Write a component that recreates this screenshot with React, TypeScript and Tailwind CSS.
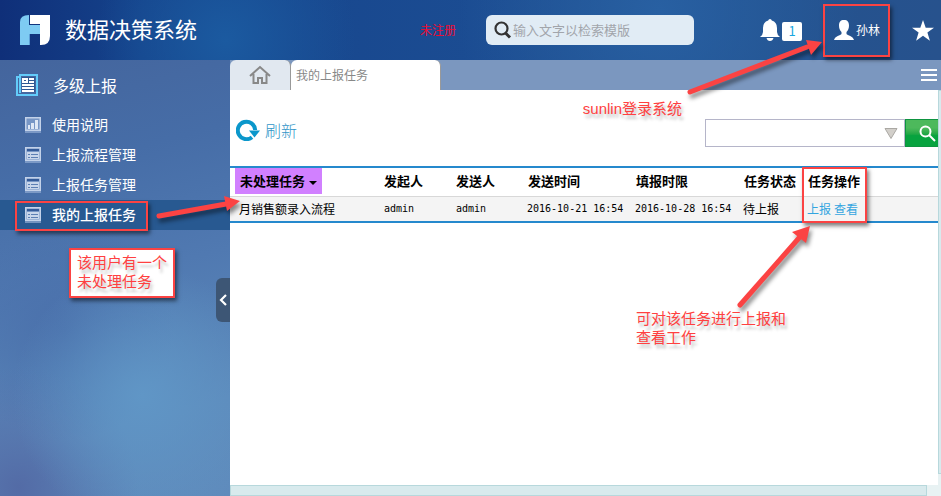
import React from 'react';
import clsx from 'clsx';

const menuItems = [
  { label: '使用说明', icon: 'chart' },
  { label: '上报流程管理', icon: 'form' },
  { label: '上报任务管理', icon: 'form' },
  { label: '我的上报任务', icon: 'form', active: true },
];

const tasks = [
  {
    name: '月销售额录入流程',
    initiator: 'admin',
    sender: 'admin',
    sentAt: '2016-10-21 16:54',
    deadline: '2016-10-28 16:54',
    status: '待上报',
  },
];

const Logo: React.FC = () => (
  <svg width="32" height="32" viewBox="0 0 32 32" aria-hidden="true">
    <path d="M10 1v10h11v9H10v11H1V8q0-7 9-7z" fill="#7ecbf3" />
    <path d="M11 1h20v21q0 9-9 9h-1V10H11z" fill="#fff" />
    <path d="M10.500 20v11" stroke="#5d9ed6" />
  </svg>
);

const SectionIcon: React.FC = () => (
  <svg width="22" height="22" viewBox="0 0 22 22" aria-hidden="true">
    <path d="M4 1h17v20H1V3h3z" fill="none" stroke="#63ccfa" strokeWidth="2" />
    <path d="M4 3v16" stroke="#63ccfa" strokeWidth="2" />
    <path d="M6 3h13v15H6z" fill="#2f5893" />
    <path d="M6 4h6v5H6zM13 4h5v2h-5zM13 7h5v2h-5zM6 10h12v2H6zM6 13h12v2H6zM6 16h12v2H6z" fill="#fff" />
    <path d="M8 6h2v1H8z" fill="#2f5893" />
  </svg>
);

const MenuIcon: React.FC<{ type: string }> = ({ type }) => (
  <svg width="16" height="16" viewBox="0 0 16 16" className="mt-0.5" aria-hidden="true">
    <path d="M.75 .75h14.500v12.500H.75z" fill="#7796c5" stroke="#c3d2e9" strokeWidth="1.500" />
    <path d="M0 15h16" stroke="#8ea8d0" strokeWidth="1.500" />
    {type === 'chart' ? (
      <path d="M3 8h2v4H3zM6 6h3v6H6zM10 3h3v9h-3z" fill="#dfe8f5" />
    ) : (
      <>
        <path d="M2 2h12v2H2z" fill="#345b99" />
        <path d="M2 5h12v7H2z" fill="#c8d6eb" />
        <path d="M3 7.500h2M6 7.500h7M3 10.500h2M6 10.500h7" stroke="#5c7fb4" />
      </>
    )}
  </svg>
);

const Header: React.FC = () => (
  <header className="flex h-15 items-center pr-[7px] pl-[19px] text-white">
    <Logo />
    <h1 className="ml-3.5 pb-1 text-[22px] leading-8 whitespace-nowrap">数据决策系统</h1>
    <span className="ml-auto text-xs text-[#f00a32]">未注册</span>
    <label className="ml-[30px] flex h-[30px] w-52 items-center rounded-md bg-[#e1ecf5] pl-2">
      <svg width="18" height="18" viewBox="0 0 18 18" fill="none" stroke="#333" aria-hidden="true">
        <circle cx="7.500" cy="7.500" r="6" strokeWidth="2.200" />
        <path d="M11.500 12l4.500 4.500" strokeWidth="3" />
      </svg>
      <input
        type="text"
        aria-label="检索模版"
        placeholder="输入文字以检索模版"
        className="ml-px w-44 min-w-0 bg-transparent text-[13px] text-[#333] outline-none placeholder:text-[#a2a5ab]"
      />
    </label>
    <button type="button" aria-label="消息" className="ml-[66px] flex items-center gap-0.5">
      <svg width="20" height="22" viewBox="0 0 20 22" fill="#fff" aria-hidden="true">
        <path d="M10 0q1.500 0 1.800 1.500Q17 3 17 9v4q0 2.500 3 5H0q3-2.500 3-5V9q0-6 5.200-7.500Q8.500 0 10 0zM6.500 19h7q-.8 3-3.500 3t-3.500-3z" />
      </svg>
      <span className="mt-0.5 h-[19px] w-5 rounded-xs bg-white text-center text-[13px] leading-[18px] text-[#1aa5e0]">1</span>
    </button>
    <button type="button" className="ml-8 flex items-center gap-0.5 text-xs">
      <svg width="20" height="20" viewBox="0 0 20 20" fill="#fff" aria-hidden="true">
        <path d="M10 0c3.500 0 5 2 5 5.500 0 3-.9 5-2.500 6.500v2c1 1.500 6.500 2 7.500 6H0c1-4 6.500-4.500 7.500-6v-2C5.900 10.500 5 8.500 5 5.500 5 2 6.500 0 10 0z" />
      </svg>
      孙林
    </button>
    <button type="button" aria-label="收藏" className="ml-8">
      <svg width="22" height="21" viewBox="0 0 22 21" fill="#fff" aria-hidden="true">
        <path d="M11 0l2.700 7.700H22l-6.600 4.900 2.500 8.100L11 15.800l-6.900 4.900 2.500-8.100L0 7.700h8.300z" />
      </svg>
    </button>
  </header>
);

const Sidebar: React.FC = () => (
  <aside className="relative w-[230px] shrink-0 bg-[radial-gradient(circle_at_62%_77%,#6096c6_0%,transparent_130px),radial-gradient(circle_at_8%_98%,#536ba6_0%,transparent_120px),radial-gradient(circle_at_28%_62%,#4a70ab_0%,transparent_110px),linear-gradient(165deg,#44659d_0%,#466da7_25%,#5079b1_50%,#5d8abb_80%,#5f8bbc_100%)]">
    <h2 className="flex h-[50px] items-center gap-[15px] pl-[16px] text-base text-white">
      <SectionIcon />
      多级上报
    </h2>
    <nav>
      {menuItems.map((item) => (
        <a
          key={item.label}
          href="#"
          className={clsx(
            'flex h-[30px] items-center gap-[11px] pb-0.5 pl-[25px] text-sm text-white',
            item.active && 'bg-[#285991] font-medium',
          )}
        >
          <MenuIcon type={item.icon} />
          {item.label}
        </a>
      ))}
    </nav>
    <button
      type="button"
      aria-label="收起菜单"
      className="absolute top-[218px] right-0 flex h-11 w-3.5 items-center justify-center rounded-l-md bg-[#3d5675]"
    >
      <svg width="8" height="12" viewBox="0 0 8 12" fill="none" stroke="#fff" strokeWidth="2.200" aria-hidden="true">
        <path d="M7 1L2 6l5 5" />
      </svg>
    </button>
  </aside>
);

const TabBar: React.FC = () => (
  <div className="flex h-[30px] bg-[#7b97bf]">
    <button
      type="button"
      aria-label="首页"
      className="flex w-[61px] items-center justify-center rounded-t-md border-r border-[#999] bg-[#e1e8f0]"
    >
      <svg width="22" height="20" viewBox="0 0 22 20" fill="none" stroke="#888" strokeWidth="2" aria-hidden="true">
        <path d="M1 11L11 2l10 9M4.500 9v9H9v-5h4v5h4.500V9" />
      </svg>
    </button>
    <button
      type="button"
      className="w-[150px] rounded-t-md border-r border-[#999] bg-white pl-[5px] text-left text-xs text-[#888]"
    >
      我的上报任务
    </button>
    <button type="button" aria-label="更多" className="mr-1 ml-auto">
      <svg width="16" height="12" viewBox="0 0 16 12" stroke="#fff" strokeWidth="2" aria-hidden="true">
        <path d="M0 1h16M0 6h16M0 11h16" />
      </svg>
    </button>
  </div>
);

const Toolbar: React.FC = () => (
  <div className="flex h-[76px] items-center">
    <button type="button" className="mt-1 ml-1.5 flex items-center gap-[5px] text-base font-light text-[#2f95c8]">
      <svg width="24" height="22" viewBox="0 0 24 22" aria-hidden="true">
        <path d="M16 18.200A8.700 8.700 0 1 1 19.200 11" fill="none" stroke="#0b97cb" strokeWidth="4" />
        <path d="M13 11.500h11l-5.500 7z" fill="#0b97cb" />
      </svg>
      刷新
    </button>
    <div className="mt-2.5 ml-auto flex h-7">
      <label className="flex w-[200px] items-center border border-[#b5b5c9] pr-1.5">
        <input type="text" aria-label="搜索任务" className="min-w-0 flex-1 px-1 text-xs outline-none" />
        <svg width="14" height="11" viewBox="0 0 14 11" aria-hidden="true">
          <path d="M1 .5h12L7 10.500z" fill="#d2cfca" stroke="#aaa8a3" />
        </svg>
      </label>
      <button
        type="button"
        aria-label="搜索"
        className="flex w-[33px] items-center justify-end border border-r-0 border-[#0e9440] bg-linear-to-b from-[#4db95c] from-30% to-[#07a33f] to-60% pr-0.5"
      >
        <svg width="17" height="17" viewBox="0 0 17 17" fill="none" stroke="#fff" strokeWidth="2" aria-hidden="true">
          <circle cx="6.500" cy="6.500" r="5" />
          <path d="M10 10l6 6" />
        </svg>
      </button>
    </div>
  </div>
);

const TaskTable: React.FC = () => (
  <table className="w-full table-fixed border-y-2 border-[#2589cd] text-left text-xs whitespace-nowrap text-black">
    <colgroup>
      <col className="w-[149px]" />
      <col className="w-[72px]" />
      <col className="w-[72px]" />
      <col className="w-[108px]" />
      <col className="w-[108px]" />
      <col className="w-[64px]" />
      <col />
    </colgroup>
    <thead>
      <tr className="h-[29px] border-b border-[#d8d8d8] text-[13px] leading-[26px]">
        <th className="p-0 pl-[5px] align-top">
          <button type="button" className="flex h-[26px] items-center gap-1 bg-[#d180ff] px-[5px] font-bold">
            未处理任务
            <svg width="8" height="4" viewBox="0 0 8 4" className="mt-1" aria-hidden="true">
              <path d="M0 0h8L4 4z" />
            </svg>
          </button>
        </th>
        <th className="p-0 pl-[5px] align-top">发起人</th>
        <th className="p-0 pl-[5px] align-top">发送人</th>
        <th className="p-0 pl-[5px] align-top">发送时间</th>
        <th className="p-0 pl-[5px] align-top">填报时限</th>
        <th className="p-0 pl-[5px] align-top">任务状态</th>
        <th className="p-0 pl-[5px] align-top">任务操作</th>
      </tr>
    </thead>
    <tbody>
      {tasks.map((task) => (
        <tr key={task.name} className="h-[26px] bg-[#f4f4f4]">
          <td className="p-0 pl-[9px]">{task.name}</td>
          <td className="p-0 pl-[5px] font-['DejaVu_Sans_Mono',monospace] text-[10px]">{task.initiator}</td>
          <td className="p-0 pl-[5px] font-['DejaVu_Sans_Mono',monospace] text-[10px]">{task.sender}</td>
          <td className="p-0 pl-1 font-['DejaVu_Sans_Mono',monospace] text-[10px]">{task.sentAt}</td>
          <td className="p-0 pl-1 font-['DejaVu_Sans_Mono',monospace] text-[10px]">{task.deadline}</td>
          <td className="p-0 pl-1">{task.status}</td>
          <td className="p-0 pl-1">
            <span className="flex gap-[3px] text-[#33a5e0]">
              <a href="#">上报</a>
              <a href="#">查看</a>
            </span>
          </td>
        </tr>
      ))}
    </tbody>
  </table>
);

// Red boxes, notes and arrows drawn over the page
const noteText =
  "text-[15px] leading-[19px] text-[#ff4040] [text-shadow:2px_4px_3px_rgba(0,0,0,0.25)] font-['Liberation_Sans','Noto_Sans_CJK_SC',sans-serif]";
const noteBox = 'absolute border-2 border-[#fb4343] shadow-[2px_3px_4px_rgba(0,0,0,0.5)]';
const arrow = 'absolute overflow-visible drop-shadow-[2px_4px_2px_rgba(0,0,0,0.45)]';

const Annotations: React.FC = () => (
  <div className="pointer-events-none absolute inset-0">
    <div className={clsx(noteBox, 'top-1 right-[51px] h-[53px] w-[67px]')} />
    <svg className={clsx(arrow, 'top-[38px] right-[119px]')} width="135" height="56" viewBox="0 0 135 56" aria-hidden="true">
      <path d="M3 54L120 9" stroke="#fb4343" strokeWidth="5" strokeLinecap="round" />
      <path d="M119 2l16 2-11 13z" fill="#fb4343" />
    </svg>
    <p className={clsx(noteText, 'absolute top-[99px] right-[259px] whitespace-nowrap')}>sunlin登录系统</p>

    <div className={clsx(noteBox, 'top-[201px] left-[15px] h-[30px] w-[133px]')} />
    <svg className={clsx(arrow, 'top-[195px] left-[156px]')} width="84" height="24" viewBox="0 0 84 24" aria-hidden="true">
      <path d="M3 21L70 9" stroke="#fb4343" strokeWidth="5" strokeLinecap="round" />
      <path d="M68 1l16 5-13 10z" fill="#fb4343" />
    </svg>
    <div className={clsx(noteBox, 'top-[248px] left-[69px] bg-white px-1.5 pt-[3px] pb-[5px]', noteText)}>
      该用户有一个
      <br />
      未处理任务
    </div>

    <div className={clsx(noteBox, 'top-[167px] left-[802px] h-[56px] w-[65px]')} />
    <svg className={clsx(arrow, 'top-[226px] left-[737px]')} width="73" height="82" viewBox="0 0 73 82" aria-hidden="true">
      <path d="M3 79L62 12" stroke="#fb4343" strokeWidth="5" strokeLinecap="round" />
      <path d="M73 0l-4 17-14-11z" fill="#fb4343" />
    </svg>
    <p className={clsx(noteText, 'absolute top-[309px] left-[636px] whitespace-nowrap')}>
      可对该任务进行上报和
      <br />
      查看工作
    </p>
  </div>
);

const App: React.FC = () => (
  <div className="relative flex min-h-screen flex-col overflow-hidden bg-[radial-gradient(circle_at_24%_40px,#1b5aa0_0%,transparent_130px),radial-gradient(circle_at_70%_10px,#2860a2_0%,transparent_200px),linear-gradient(90deg,#0f2f79_0%,#15438b_15%,#1b4c92_50%,#23528f_80%,#27528d_100%)] font-['Noto_Sans_CJK_SC',sans-serif]">
    <Header />
    <div className="flex flex-1">
      <Sidebar />
      <main className="flex min-w-0 flex-1 flex-col">
        <TabBar />
        <div className="flex flex-1 bg-white">
          <div className="flex min-w-0 flex-1 flex-col">
            <Toolbar />
            <TaskTable />
            <div className="mt-auto flex h-[11px] bg-[#e8f2f3] pr-[11px]">
              <div className="flex-1 border border-[#b7d8dc] bg-[#d8eaed]" />
            </div>
          </div>
          <div className="w-[3px] bg-[#e8f2f3] pb-[22px]">
            <div className="h-full border border-r-0 border-[#b7d8dc] bg-[#d8eaed]" />
          </div>
        </div>
      </main>
    </div>
    <Annotations />
  </div>
);

export default App;
